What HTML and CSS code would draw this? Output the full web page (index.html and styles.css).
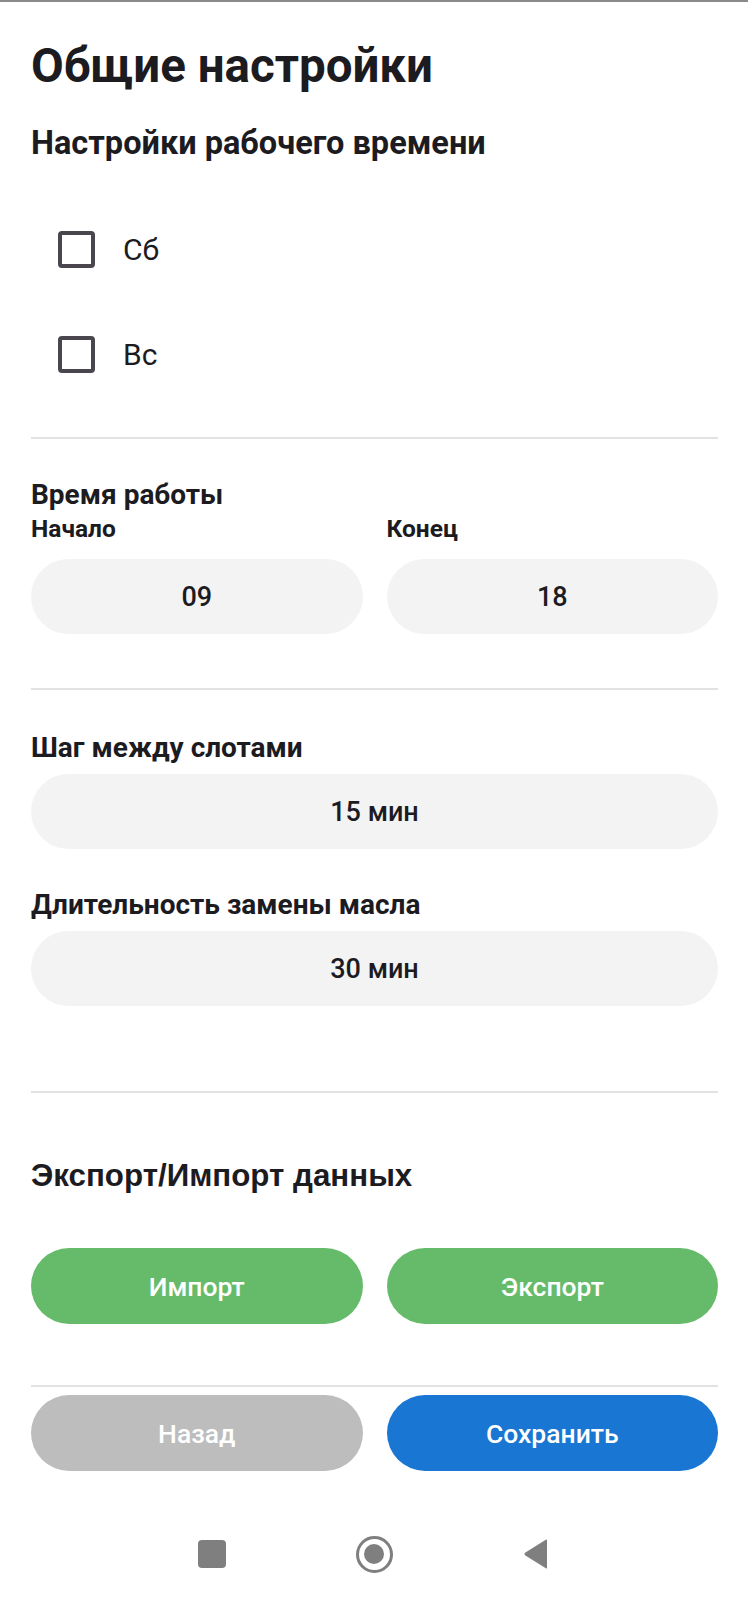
FILE: index.html
```html
<!DOCTYPE html>
<html lang="ru">
<head>
    <meta charset="UTF-8">
    <meta name="viewport" content="width=device-width, initial-scale=1.0">
    <title>Общие настройки</title>
    <link rel="stylesheet" href="styles.css">
</head>
<body>
    <div class="page">
        <h1>Общие настройки</h1>
        <h2>Настройки рабочего времени</h2>

        <label class="check-row">
            <span class="check-box"></span>
            <span class="check-text">Сб</span>
        </label>
        <label class="check-row">
            <span class="check-box"></span>
            <span class="check-text">Вс</span>
        </label>

        <hr class="divider first">

        <div class="field-title work-time">Время работы</div>
        <div class="two-cols">
            <div class="col">
                <div class="small-label">Начало</div>
                <div class="pill">09</div>
            </div>
            <div class="col">
                <div class="small-label">Конец</div>
                <div class="pill">18</div>
            </div>
        </div>

        <hr class="divider second">

        <div class="field-title step">Шаг между слотами</div>
        <div class="pill single">15 мин</div>

        <div class="field-title oil">Длительность замены масла</div>
        <div class="pill single">30 мин</div>

        <hr class="divider third">

        <h3>Экспорт/Импорт данных</h3>
        <div class="two-cols buttons">
            <button class="btn btn-green">Импорт</button>
            <button class="btn btn-green">Экспорт</button>
        </div>

        <hr class="divider fourth">

        <div class="two-cols">
            <button class="btn btn-back">Назад</button>
            <button class="btn btn-save">Сохранить</button>
        </div>
    </div>

    <div class="nav-bar">
        <div class="nav-slot"><span class="nav-square"></span></div>
        <div class="nav-slot"><span class="nav-home"><span class="nav-dot"></span></span></div>
        <div class="nav-slot">
            <svg class="nav-back" width="26" height="32" viewBox="0 0 26 32">
                <path d="M24 2.5 L24 29.5 Q24 31 22.8 30.2 L2 17.2 Q0.8 16 2 14.8 L22.8 1.8 Q24 1 24 2.5 Z" fill="#7f7f7f"/>
            </svg>
        </div>
    </div>
</body>
</html>
```

FILE: styles.css
```css
body {
    margin: 0;
    border-top: 2px solid #8a8a8a;
    background-color: #ffffff;
    font-family: "Roboto", sans-serif;
    color: #1c1b1f;
}

.page {
    padding: 0 30px 0 31px;
}

h1 {
    margin: 37px 0 0;
    font-size: 47.5px;
    line-height: 54px;
    font-weight: 700;
}

h2 {
    margin: 30px 0 0;
    font-size: 32.5px;
    line-height: 40px;
    font-weight: 700;
}

.check-row {
    display: flex;
    align-items: center;
    height: 105px;
    padding-left: 27px;
}

.check-row:first-of-type {
    margin-top: 34px;
}

.check-box {
    width: 29px;
    height: 29px;
    border: 4px solid #49464d;
    border-radius: 4px;
}

.check-text {
    margin-left: 28px;
    font-size: 30px;
}

.divider {
    border: none;
    height: 2px;
    margin: 0;
    background-color: #e2e2e2;
}

.divider.first {
    margin-top: 30px;
}

.divider.second {
    margin-top: 54px;
}

.divider.third {
    margin-top: 85px;
}

.divider.fourth {
    margin-top: 61px;
}

.field-title {
    font-size: 28px;
    line-height: 34px;
    font-weight: 700;
}

.work-time {
    margin-top: 39px;
}

.step {
    margin-top: 41px;
}

.oil {
    margin-top: 39px;
}

.two-cols {
    display: grid;
    grid-template-columns: 1fr 1fr;
    column-gap: 24px;
}

.small-label {
    margin-top: 2px;
    font-size: 24.5px;
    line-height: 30px;
    font-weight: 700;
}

.pill {
    display: flex;
    align-items: center;
    justify-content: center;
    height: 75px;
    margin-top: 15px;
    border-radius: 38px;
    background-color: #f3f3f3;
    font-size: 27px;
    font-weight: 500;
}

.pill.single {
    margin-top: 9px;
}

h3 {
    margin: 65px 0 0;
    font-family: "Liberation Sans", Arial, sans-serif;
    font-size: 31.3px;
    line-height: 36px;
    font-weight: 700;
}

.buttons {
    margin-top: 54px;
}

.btn {
    height: 76px;
    border: none;
    border-radius: 38px;
    color: #ffffff;
    font-family: "Roboto", sans-serif;
    font-size: 26.5px;
    font-weight: 500;
    cursor: pointer;
}

.btn-green {
    background-color: #66bb6a;
}

.divider.fourth + .two-cols {
    margin-top: 8px;
}

.btn-back {
    background-color: #bdbdbd;
}

.btn-save {
    background-color: #1976d2;
}

/* system navigation */
.nav-bar {
    display: flex;
    justify-content: center;
    align-items: center;
    height: 80px;
    margin-top: 43px;
}

.nav-slot {
    display: flex;
    justify-content: center;
    align-items: center;
    width: 162px;
}

.nav-square {
    width: 28px;
    height: 28px;
    border-radius: 4px;
    background-color: #7f7f7f;
}

.nav-home {
    display: flex;
    justify-content: center;
    align-items: center;
    width: 31px;
    height: 31px;
    border: 3px solid #7f7f7f;
    border-radius: 50%;
}

.nav-dot {
    width: 20px;
    height: 20px;
    border-radius: 50%;
    background-color: #7f7f7f;
}
```
